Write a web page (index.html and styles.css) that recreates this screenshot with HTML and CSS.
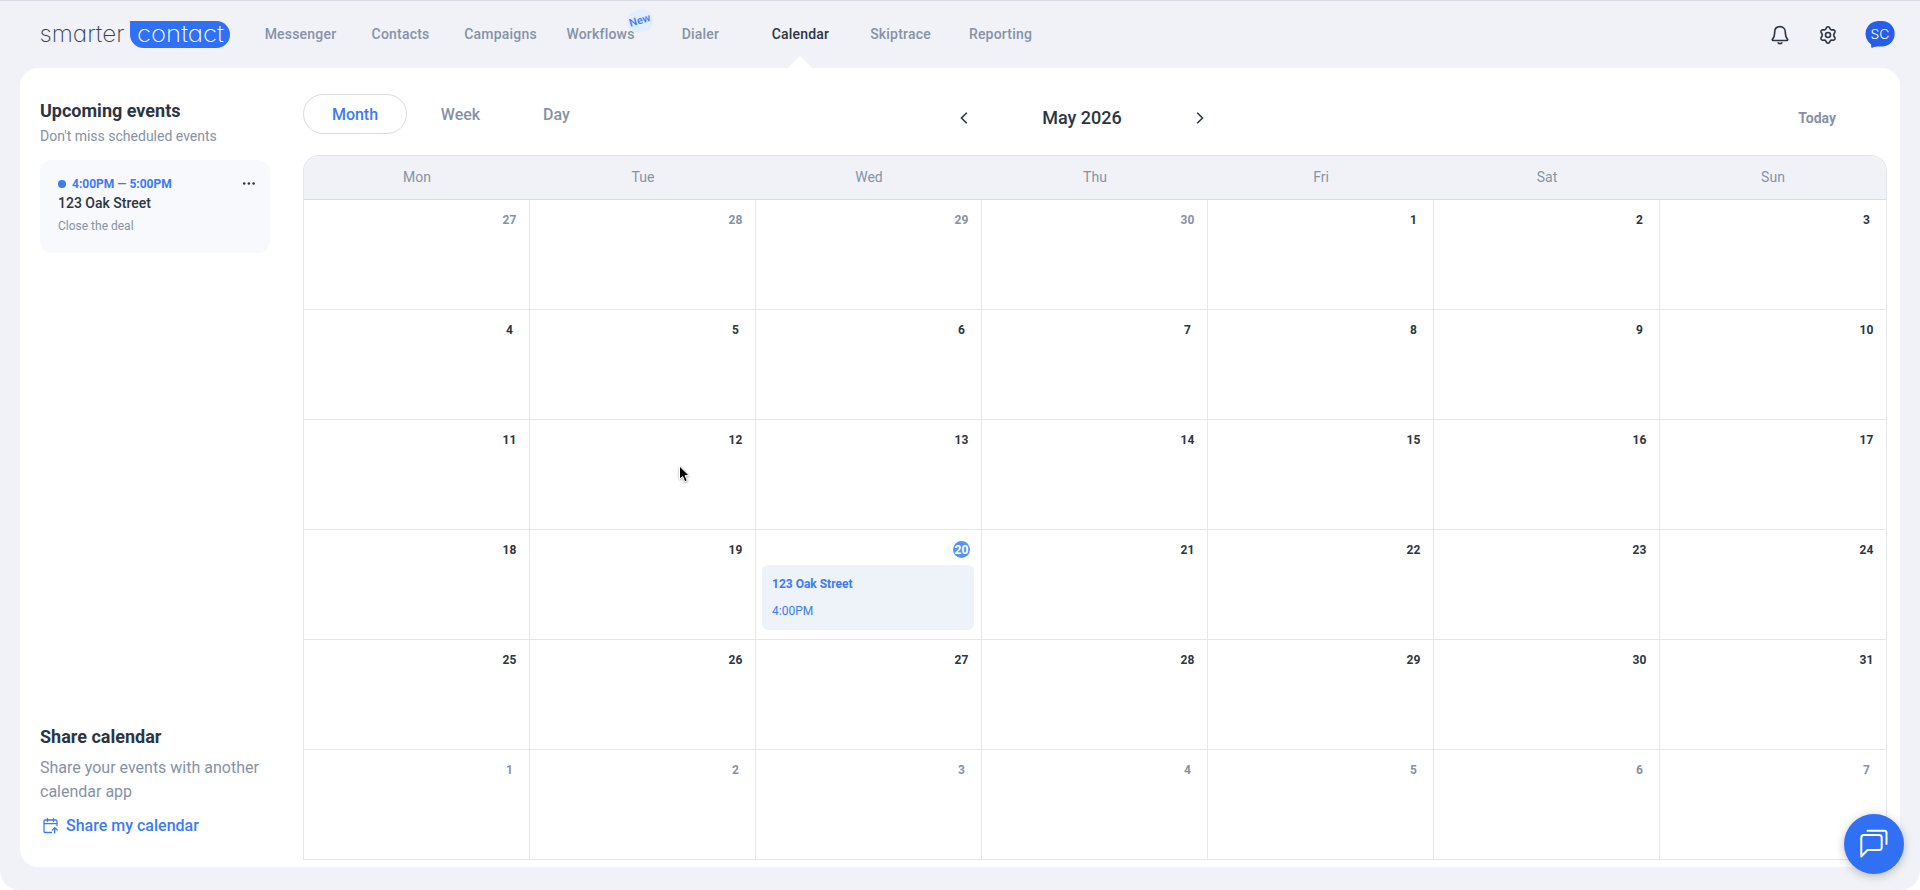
FILE: index.html
```html
<!DOCTYPE html>
<html lang="en">
<head>
    <meta charset="UTF-8">
    <meta name="viewport" content="width=device-width, initial-scale=1.0">
    <title>Calendar</title>
    <link rel="stylesheet" href="styles.css">
</head>
<body>
    <div class="app">
        <header class="header">
            <a class="logo" href="#">
                <svg width="190" height="34" viewBox="0 0 190 34">
                    <path class="logo-bg" d="M90 0H176.500A13.500 13.500 0 0 1 176.500 27H103.500A13.500 13.500 0 0 1 90 13.500Z"/>
                    <text class="logo-dark" x="-0.500" y="20.500" textLength="85" lengthAdjust="spacingAndGlyphs">smarter</text>
                    <text class="logo-light" x="97" y="20.500" textLength="87" lengthAdjust="spacingAndGlyphs">contact</text>
                </svg>
            </a>
            <nav class="nav">
                <a href="#">Messenger</a>
                <a href="#">Contacts</a>
                <a href="#">Campaigns</a>
                <a href="#">Workflows<span class="badge">New</span></a>
                <a href="#">Dialer</a>
                <a href="#" class="active">Calendar</a>
                <a href="#">Skiptrace</a>
                <a href="#">Reporting</a>
            </nav>
            <div class="actions">
                <svg class="bell" width="20" height="20" viewBox="0 0 20 20">
                    <path d="M10 1.600C6.600 1.600 4.700 4 4.700 7C4.700 11 3.900 12.700 2.500 14.200C2 14.800 2.300 15.500 3 15.500H17C17.700 15.500 18 14.800 17.500 14.200C16.100 12.700 15.300 11 15.300 7C15.300 4 13.400 1.600 10 1.600Z"/>
                    <path d="M8.200 17.800Q10 19.300 11.800 17.800"/>
                </svg>
                <svg class="gear" width="20" height="20" viewBox="0 0 20 20">
                    <path d="M8.500 2.600Q10 .9 11.500 2.600L12.300 4.200Q12.700 4.900 13.500 4.900L15.300 4.800Q17.600 5.200 16.900 7.400L15.900 9Q15.400 10 15.900 11L16.900 12.600Q17.600 14.800 15.300 15.200L13.500 15.100Q12.700 15.100 12.300 15.800L11.500 17.400Q10 19.100 8.500 17.400L7.700 15.800Q7.300 15.100 6.500 15.100L4.700 15.200Q2.400 14.800 3.100 12.600L4.100 11Q4.600 10 4.100 9L3.100 7.400Q2.400 5.200 4.700 4.800L6.500 4.900Q7.300 4.900 7.700 4.200Z"/>
                    <circle cx="10" cy="10" r="2.500"/>
                </svg>
                <svg class="avatar" width="30" height="27" viewBox="0 0 30 27">
                    <path d="M13 0H17A12.700 12.700 0 0 1 17 25.400H12Q9 25.500 6.500 27Q6 25 6 23.200A12.700 12.700 0 0 1 13 0Z"/>
                    <text x="15" y="17.700" text-anchor="middle" textLength="19" lengthAdjust="spacingAndGlyphs">SC</text>
                </svg>
            </div>
        </header>

        <main class="panel">
            <aside class="sidebar">
                <h2>Upcoming events</h2>
                <p class="subtitle">Don't miss scheduled events</p>
                <div class="event-card">
                    <div class="event-time">
                        <span class="dot"></span>
                        <span>4:00PM — 5:00PM</span>
                        <svg class="more" width="14" height="4" viewBox="0 0 14 4">
                            <circle cx="2.200" cy="1.500" r="1.300"/>
                            <circle cx="6.900" cy="1.500" r="1.300"/>
                            <circle cx="11.600" cy="1.500" r="1.300"/>
                        </svg>
                    </div>
                    <div class="event-title">123 Oak Street</div>
                    <div class="event-note">Close the deal</div>
                </div>
                <section class="share">
                    <h2>Share calendar</h2>
                    <p>Share your events with another calendar app</p>
                    <a href="#" class="share-link">
                        <svg width="16" height="16" viewBox="0 0 16 16">
                            <path d="M8.500 14.500H2.200Q1 14.500 1 13.300V3.200Q1 2 2.200 2H12.800Q14 2 14 3.200V7.500M1 5.600H14M4.500.5V3.500M10.500.5V3.500M11.700 15V10M9.300 12L11.700 9.600L14.200 12"/>
                        </svg>
                        <span>Share my calendar</span>
                    </a>
                </section>
            </aside>

            <section class="content">
                <div class="toolbar">
                    <div class="tabs">
                        <button class="tab selected">Month</button>
                        <button class="tab">Week</button>
                        <button class="tab">Day</button>
                    </div>
                    <div class="switcher">
                        <svg width="10" height="14" viewBox="0 0 10 14"><path d="M7.800 1.800L2.500 7L7.800 12.200"/></svg>
                        <span class="month">May 2026</span>
                        <svg width="10" height="14" viewBox="0 0 10 14"><path d="M2.200 1.800L7.500 7L2.200 12.200"/></svg>
                    </div>
                    <button class="today">Today</button>
                </div>

                <div class="calendar">
                    <div class="weekdays">
                        <span>Mon</span><span>Tue</span><span>Wed</span><span>Thu</span><span>Fri</span><span>Sat</span><span>Sun</span>
                    </div>
                    <div class="days">
                        <div class="day out"><span>27</span></div>
                        <div class="day out"><span>28</span></div>
                        <div class="day out"><span>29</span></div>
                        <div class="day out"><span>30</span></div>
                        <div class="day"><span>1</span></div>
                        <div class="day"><span>2</span></div>
                        <div class="day"><span>3</span></div>

                        <div class="day"><span>4</span></div>
                        <div class="day"><span>5</span></div>
                        <div class="day"><span>6</span></div>
                        <div class="day"><span>7</span></div>
                        <div class="day"><span>8</span></div>
                        <div class="day"><span>9</span></div>
                        <div class="day"><span>10</span></div>

                        <div class="day"><span>11</span></div>
                        <div class="day"><span>12</span></div>
                        <div class="day"><span>13</span></div>
                        <div class="day"><span>14</span></div>
                        <div class="day"><span>15</span></div>
                        <div class="day"><span>16</span></div>
                        <div class="day"><span>17</span></div>

                        <div class="day"><span>18</span></div>
                        <div class="day"><span>19</span></div>
                        <div class="day current">
                            <span>20</span>
                            <div class="entry">
                                <b>123 Oak Street</b>
                                <em>4:00PM</em>
                            </div>
                        </div>
                        <div class="day"><span>21</span></div>
                        <div class="day"><span>22</span></div>
                        <div class="day"><span>23</span></div>
                        <div class="day"><span>24</span></div>

                        <div class="day"><span>25</span></div>
                        <div class="day"><span>26</span></div>
                        <div class="day"><span>27</span></div>
                        <div class="day"><span>28</span></div>
                        <div class="day"><span>29</span></div>
                        <div class="day"><span>30</span></div>
                        <div class="day"><span>31</span></div>

                        <div class="day out"><span>1</span></div>
                        <div class="day out"><span>2</span></div>
                        <div class="day out"><span>3</span></div>
                        <div class="day out"><span>4</span></div>
                        <div class="day out"><span>5</span></div>
                        <div class="day out"><span>6</span></div>
                        <div class="day out"><span>7</span></div>
                    </div>
                </div>
            </section>
        </main>
    </div>

    <button class="chat">
        <svg width="30" height="30" viewBox="0 0 30 30">
            <path d="M2.300 27.500V8.500Q2.300 6 4.800 6H20.200Q22.700 6 22.700 8.500V18.500Q22.700 21 20.200 21H8.500Z"/>
            <path d="M8.500 1.800H25.500Q27.500 1.800 27.500 3.800V15"/>
        </svg>
    </button>

    <svg class="cursor" width="14" height="20" viewBox="0 0 14 20">
        <path d="M1.500 1V14.300L4.600 11.500L6.800 16.700L9.300 15.600L7.100 10.600H11.200Z"/>
    </svg>
</body>
</html>
```
FILE: styles.css
```css
* {
    box-sizing: border-box;
}
body {
    margin: 0;
    background: #fff;
    font-family: Roboto, "Liberation Sans", sans-serif;
    color: #2b3642;
}
h2, p {
    margin: 0;
}
a {
    color: inherit;
    text-decoration: none;
}
button {
    border: 0;
    padding: 0;
    background: none;
    font-family: inherit;
}
svg {
    display: block;
    fill: none;
    overflow: visible;
}
.app {
    height: 890px;
    padding: 0 20px 23px;
    display: flex;
    flex-direction: column;
    background: #f1f2f7;
    border-top: 1px solid #d8dae5;
    border-radius: 0 0 20px 20px;
}

/* header */
.header {
    height: 67px;
    flex: none;
    display: flex;
    padding: 0 5px 0 20px;
}
.logo {
    width: 210px;
    padding-top: 20px;
}
.logo-bg {
    fill: #2f70f5;
}
.logo text {
    font-family: Inter, Lato, sans-serif;
    font-size: 23px;
    font-weight: 200;
    font-feature-settings: "cv11";
}
.logo-dark {
    fill: #36434f;
}
.logo-light {
    fill: #fff;
}
.nav {
    display: flex;
}
.nav a {
    width: 100px;
    position: relative;
    text-align: center;
    font-size: 14px;
    font-weight: 500;
    line-height: 66px;
    letter-spacing: 0.2px;
    text-indent: 1px;
    color: #8592a6;
}
.nav .active {
    color: #2b3642;
}
.nav .active::after {
    content: "";
    position: absolute;
    left: 38px;
    bottom: 0;
    border: 12px solid transparent;
    border-top: 0;
    border-bottom-color: #fff;
}
.badge {
    position: absolute;
    left: 77px;
    top: 9px;
    width: 26px;
    height: 22px;
    border-radius: 10px;
    background: #e2edfd;
    color: #3b7bf6;
    font-size: 11px;
    line-height: 22px;
    letter-spacing: 0;
    text-indent: 0;
    transform: rotate(-17deg);
}
.actions {
    margin-left: auto;
    display: flex;
    align-items: center;
    gap: 28px;
}
.bell, .gear {
    stroke: #2b3642;
    stroke-width: 1.6;
    stroke-linecap: round;
    stroke-linejoin: round;
}
.gear {
    margin-right: -1px;
}
.avatar path {
    fill: #265ee9;
}
.avatar text {
    fill: #fff;
    font-family: Inter, Lato, sans-serif;
    font-size: 13px;
    font-weight: 300;
}

/* main panel */
.panel {
    flex: 1;
    display: flex;
    background: #fff;
    border-radius: 18px;
}
.sidebar {
    width: 283px;
    padding: 31px 33px 29px 20px;
    display: flex;
    flex-direction: column;
}
h2 {
    font-size: 18px;
    font-weight: 700;
    line-height: 24px;
}
.subtitle {
    margin-top: 3px;
    font-size: 14px;
    line-height: 20px;
    color: #8592a6;
}
.event-card {
    width: 230px;
    height: 93px;
    margin-top: 14px;
    padding: 16px 14px 0 18px;
    background: #f8f9fc;
    border-radius: 12px;
}
.event-time {
    display: flex;
    align-items: center;
    height: 16px;
    font-size: 12px;
    font-weight: 700;
    color: #3b7bf6;
}
.dot {
    width: 8px;
    height: 8px;
    margin-right: 6px;
    border-radius: 50%;
    background: #3b7bf6;
}
.more {
    margin-left: auto;
    fill: #2b3642;
}
.event-title {
    font-size: 14px;
    font-weight: 500;
    line-height: 22px;
}
.event-note {
    font-size: 12px;
    line-height: 24px;
    color: #8592a6;
}
.share {
    margin-top: auto;
}
.share p {
    margin-top: 7px;
    font-size: 16px;
    line-height: 24px;
    color: #8592a6;
}
.share-link {
    display: flex;
    align-items: center;
    gap: 7px;
    margin-top: 10px;
    padding-left: 3px;
    font-size: 16px;
    font-weight: 500;
    line-height: 24px;
    color: #3b7bf6;
}
.share-link svg {
    stroke: #3b7bf6;
    stroke-width: 1.3;
    stroke-linecap: round;
}
.content {
    width: 1584px;
    padding-top: 26px;
}

/* month switcher */
.toolbar {
    height: 61px;
    display: grid;
    grid-template-columns: 656px 246px 1fr;
    align-items: start;
}
.tabs {
    display: flex;
}
.tab {
    width: 104px;
    height: 40px;
    margin-right: 1px;
    border: 1px solid transparent;
    border-radius: 20px;
    color: #8592a6;
    font-size: 16px;
    font-weight: 500;
}
.tab + .tab {
    width: 95px;
}
.tab.selected {
    margin-right: 6px;
    border-color: #d8dbe0;
    color: #3b7bf6;
}
.switcher {
    height: 47px;
    display: flex;
    align-items: center;
    justify-content: space-between;
    font-size: 18px;
    font-weight: 500;
}
.switcher svg {
    stroke: #2b3642;
    stroke-width: 1.6;
}
.today {
    justify-self: end;
    height: 47px;
    margin-right: 51px;
    font-size: 14px;
    font-weight: 700;
    color: #8592a6;
}

/* calendar */
.calendar {
    border: 1px solid #e2e4e8;
    border-bottom: 0;
    border-radius: 16px 16px 0 0;
    overflow: hidden;
}
.weekdays, .days {
    display: grid;
    grid-template-columns: repeat(7, 1fr);
}
.weekdays {
    height: 44px;
    background: #f1f2f7;
    border-bottom: 1px solid #d9dbe0;
    color: #8592a6;
    font-size: 14px;
    line-height: 43px;
    text-align: center;
}
.day {
    height: 110px;
    padding: 11px 7px 0 6px;
    border-right: 1px solid #e6e7ea;
    border-bottom: 1px solid #e6e7ea;
}
.day:nth-child(7n) {
    border-right: 0;
}
.day > span {
    display: block;
    width: 17px;
    height: 17px;
    margin: 0 4px 0 auto;
    border-radius: 50%;
    text-align: center;
    font-size: 12px;
    font-weight: 700;
    line-height: 18px;
}
.out > span {
    color: #8592a6;
}
.current > span {
    background: #5593f8;
    color: #fff;
}
.entry {
    height: 65px;
    margin-top: 7px;
    padding: 9px 11px 10px 10px;
    display: flex;
    flex-direction: column;
    gap: 7px;
    border-radius: 6px;
    background: #eef2f9;
    color: #3b7bf6;
    font-size: 12px;
    line-height: 20px;
}
.entry em {
    font-style: normal;
}

/* floating items */
.chat {
    position: absolute;
    left: 1844px;
    top: 814px;
    width: 60px;
    height: 60px;
    display: grid;
    place-items: center;
    border-radius: 50%;
    background: #2f70f5;
    box-shadow: 0 2px 10px rgba(0, 0, 0, 0.25);
}
.chat svg {
    stroke: #fff;
    stroke-width: 2;
    stroke-linejoin: round;
    stroke-linecap: round;
}
.cursor {
    position: absolute;
    left: 678px;
    top: 465px;
    fill: #000;
    stroke: #fff;
    stroke-width: 1;
    filter: drop-shadow(0 1px 1px rgba(0, 0, 0, 0.35));
}
```
